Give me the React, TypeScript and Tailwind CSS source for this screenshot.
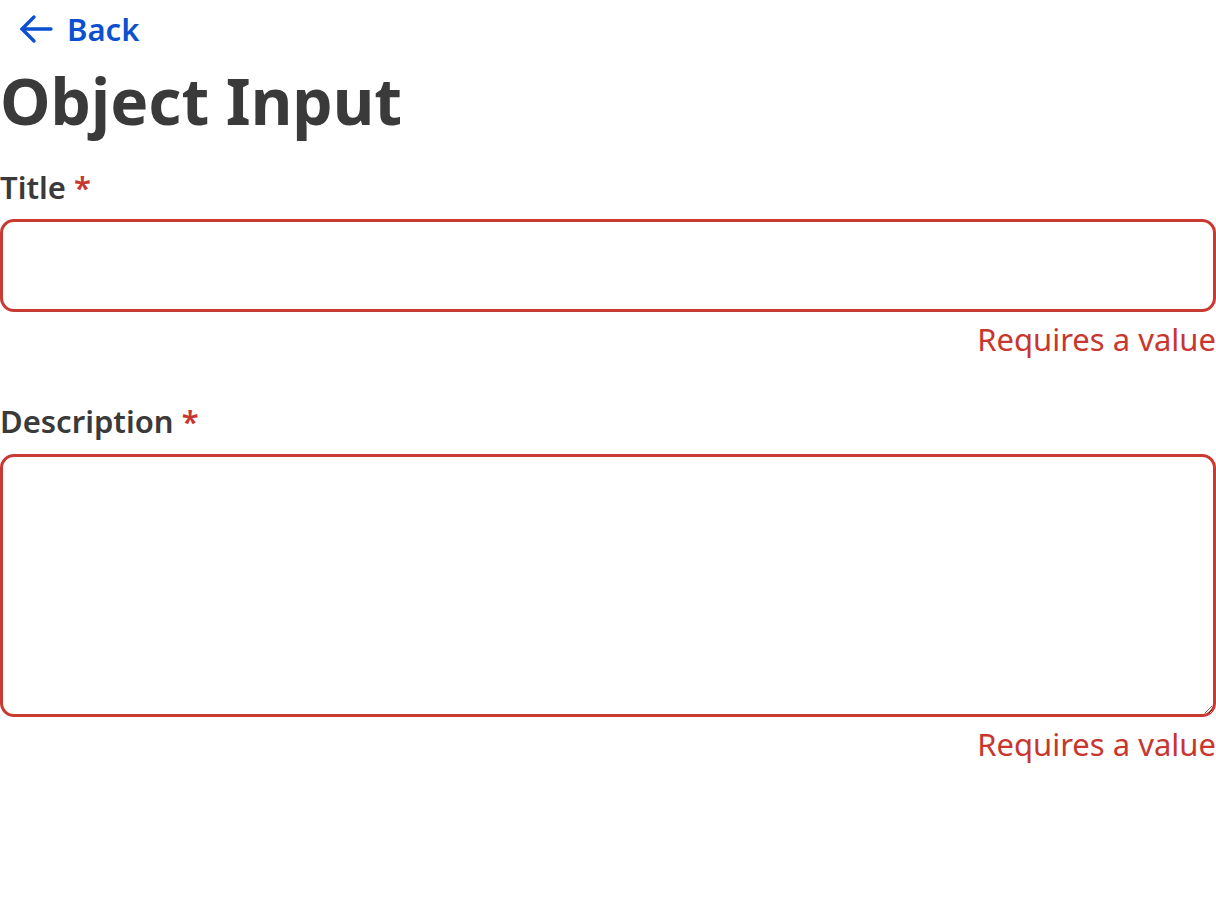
function Field({ label, multiline, gap }: { label: string; multiline?: boolean; gap: string }) {
  return (
    <div className="flex flex-col">
      <label className="text-[31px] leading-[42px] font-semibold text-[#3a3a3a]">
        {label} <span className="text-[#c8372f]">*</span>
      </label>
      {multiline ? (
        <textarea className={`${gap} h-[263px] w-full rounded-[14px] border-[3px] border-[#c83a32] bg-white outline-none`} />
      ) : (
        <input className={`${gap} h-[93px] w-full rounded-[14px] border-[3px] border-[#c83a32] bg-white outline-none`} />
      )}
      <p className="mt-[6px] text-right text-[31px] leading-[42px] text-[#c8372f]">Requires a value</p>
    </div>
  );
}

export default function App() {
  return (
    <main className="min-h-screen bg-white font-['Noto_Sans',sans-serif]">
      <a href="#" className="flex items-center gap-[14px] pl-[19px] pt-[9px] text-[#0b50d0]">
        <svg width="34" height="30" viewBox="0 0 34 30" fill="none" stroke="currentColor" strokeWidth="3.4" strokeLinecap="round" strokeLinejoin="round">
          <path d="M32 15H3" />
          <path d="M15 3L3 15L15 27" />
        </svg>
        <span className="text-[31px] leading-[40px] font-semibold">Back</span>
      </a>
      <h1 className="mt-[12px] text-[64px] leading-[80px] font-bold text-[#3a3a3a]">Object Input</h1>
      <div className="mt-[25px] flex flex-col gap-[40px]">
        <Field label="Title" gap="mt-[11px]" />
        <Field label="Description" gap="mt-[12px]" multiline />
      </div>
    </main>
  );
}
